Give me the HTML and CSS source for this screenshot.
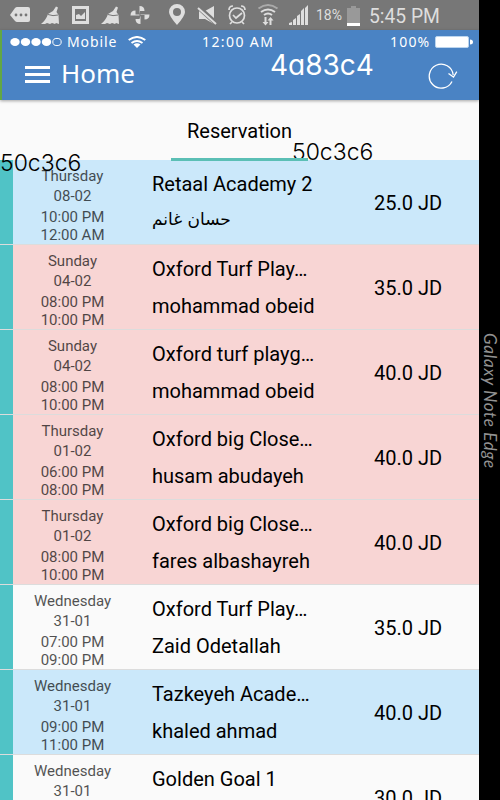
FILE: index.html
```
<!DOCTYPE html>
<html lang="en">
<head>
<meta charset="utf-8">
<title>Home</title>
<link rel="stylesheet" href="styles.css">
</head>
<body>
<div class="device">
  <div class="screen">

    <!-- Android notification bar -->
    <div class="system-bar">
      <svg class="system-icons" width="312" height="30" viewBox="0 0 312 30" fill="#dedede">
        <path d="M10 15l5-7q1-1 2-1h11q2 0 2 2v11q0 2-2 2H17q-1 0-2-1z"/>
        <g fill="#777"><circle cx="16" cy="15" r="1.4"/><circle cx="21" cy="15" r="1.4"/><circle cx="26" cy="15" r="1.4"/></g>
        <g id="broom"><path d="M41 24q5-4 7-10l5-3 3-4.500 2 1-1.500 4.500 2 3 .5 9-3-1-1 1-3-1-2 1-3-1-2 1z"/><path d="M48 14.500q5 2 10 .5" fill="none" stroke="#777" stroke-width="1"/></g>
        <use href="#broom" x="60"/>
        <path fill-rule="evenodd" d="M72 6h17v18H72zM75 9v12h11V9z"/><path d="M76 19v-4l3-1 2 2 4-4v7z"/>
        <!-- pinwheel -->
        <path d="M139.500 14.500V6q5 0 5 5H140zM140.500 14.500h9q0 5-5 5v-4.500h-4zM140.500 15.500V24q-5 0-5-5h4zM139.500 15.500h-9q0-5 5-5v4h4z"/>
        <path fill-rule="evenodd" d="M177 25q-8-9-8-13a8 8 0 0116 0q0 4-8 13zm0-17a4 4 0 100 8 4 4 0 000-8z"/>
        <path d="M199 11h6l9-5v18l-9-5h-6z"/>
        <path d="M197 6l20 18" stroke="#777" stroke-width="5"/><path d="M198 8l18 16" stroke="#dedede" stroke-width="2"/>
        <g fill="none" stroke="#dedede" stroke-width="1.7"><circle cx="237" cy="15.500" r="7.500"/><path d="M233 15l3 3 6-5M229 10q0-4 4-4M241 6q4 0 4 4M232 22l-2 2M242 22l2 2"/></g>
        <g fill="none" stroke="#dedede" stroke-width="2"><path d="M258.500 8.500q9.500-7 19 0" stroke="#aaa"/><path d="M261 12q7-5 14 0M264 15q4-3 8 0"/></g>
        <path d="M264.500 17h2v5h2l-3 3.500-3-3.500h2zM269.500 25h2v-4.500h2l-3-3.500-3 3.500h2z"/>
        <path d="M289 25v-2l3-1v3zM293 25v-5l3-2v7zM297 25V16l3-2v11zM301 25V11l3-3v17zM305 25V8l3-3v20z"/>
      </svg>
      <span class="system-percent">18%</span>
      <svg class="system-battery" width="13" height="20" viewBox="0 0 13 20">
        <path d="M4 0h5v2h4v18H0V2h4z" fill="#999"/><path d="M0 17h13v3H0z" fill="#fff"/>
      </svg>
      <span class="system-time">5:45 PM</span>
    </div>

    <div class="header">
      <div class="carrier-bar">
        <svg class="signal-dots" width="52" height="10" viewBox="0 0 52 10" fill="#fff">
          <ellipse cx="5" cy="5" rx="4.700" ry="4"/><ellipse cx="15.500" cy="5" rx="4.700" ry="4"/>
          <ellipse cx="26" cy="5" rx="4.700" ry="4"/><ellipse cx="36.500" cy="5" rx="4.700" ry="4"/>
          <ellipse cx="47" cy="5" rx="4.200" ry="3.600" fill="none" stroke="#fff"/>
        </svg>
        <span class="carrier">Mobile</span>
        <svg class="wifi" width="18" height="12" viewBox="0 0 18 12">
          <g fill="none" stroke="#fff" stroke-width="2"><path d="M.7 4q8.300-6 16.600 0M3.500 7q5.500-4 11 0"/></g>
          <path d="M5.500 8.500q3.500-2.500 7 0L9 12z" fill="#fff"/>
        </svg>
        <span class="clock">12:00 AM</span>
        <span class="charge">100%</span>
        <svg class="battery" width="38" height="12" viewBox="0 0 38 12">
          <rect x=".5" y=".5" width="33" height="11" rx="1.500" fill="#fff" stroke="#bcd5ee"/>
          <path d="M35 3.500q3 0 3 2.500t-3 2.500z" fill="#fff"/>
        </svg>
      </div>
      <div class="nav-bar">
        <div class="menu-button"><i></i><i></i><i></i></div>
        <h1 class="title">Home</h1>
        <svg class="refresh" width="30" height="28" viewBox="0 0 30 28" fill="none" stroke="#fff" stroke-width="1.300">
          <path d="M24 18.500A12 12 0 1 1 25.200 12M20.500 10.500l5 3.500 3.300-5.300"/>
        </svg>
      </div>
      <span class="note note-header">4a83c4</span>
    </div>

    <div class="tabs">
      <div class="tab">Reservation</div>
      <span class="note note-tab">50c3c6</span>
      <span class="note note-side">50c3c6</span>
    </div>

    <div class="list">
      <div class="row blue">
        <div class="date"><p>Thursday</p><p>08-02</p><p>10:00 PM</p><p>12:00 AM</p></div>
        <div class="info"><p>Retaal Academy 2</p><p class="arabic" lang="ar">حسان غانم</p></div>
        <div class="price">25.0 JD</div>
      </div>
      <div class="row pink">
        <div class="date"><p>Sunday</p><p>04-02</p><p>08:00 PM</p><p>10:00 PM</p></div>
        <div class="info"><p>Oxford Turf Play…</p><p>mohammad obeid</p></div>
        <div class="price">35.0 JD</div>
      </div>
      <div class="row pink">
        <div class="date"><p>Sunday</p><p>04-02</p><p>08:00 PM</p><p>10:00 PM</p></div>
        <div class="info"><p>Oxford turf playg…</p><p>mohammad obeid</p></div>
        <div class="price">40.0 JD</div>
      </div>
      <div class="row pink">
        <div class="date"><p>Thursday</p><p>01-02</p><p>06:00 PM</p><p>08:00 PM</p></div>
        <div class="info"><p>Oxford big Close…</p><p>husam abudayeh</p></div>
        <div class="price">40.0 JD</div>
      </div>
      <div class="row pink">
        <div class="date"><p>Thursday</p><p>01-02</p><p>08:00 PM</p><p>10:00 PM</p></div>
        <div class="info"><p>Oxford big Close…</p><p>fares albashayreh</p></div>
        <div class="price">40.0 JD</div>
      </div>
      <div class="row">
        <div class="date"><p>Wednesday</p><p>31-01</p><p>07:00 PM</p><p>09:00 PM</p></div>
        <div class="info"><p>Oxford Turf Play…</p><p>Zaid Odetallah</p></div>
        <div class="price">35.0 JD</div>
      </div>
      <div class="row blue">
        <div class="date"><p>Wednesday</p><p>31-01</p><p>09:00 PM</p><p>11:00 PM</p></div>
        <div class="info"><p>Tazkeyeh Acade…</p><p>khaled ahmad</p></div>
        <div class="price">40.0 JD</div>
      </div>
      <div class="row">
        <div class="date"><p>Wednesday</p><p>31-01</p></div>
        <div class="info"><p>Golden Goal 1</p></div>
        <div class="price">30.0 JD</div>
      </div>
    </div>
  </div>

  <div class="edge">Galaxy Note Edge</div>
</div>
</body>
</html>
```
FILE: styles.css
```
* {
  box-sizing: border-box;
}

body {
  margin: 0;
  overflow: hidden;
  font-family: Roboto, "Liberation Sans", sans-serif;
}

p, h1 {
  margin: 0;
  font-weight: normal;
}

.device {
  display: flex;
  width: 500px;
  height: 800px;
  background: #000;
}

.screen {
  width: 479px;
  height: 800px;
  overflow: hidden;
  background: #fafafa;
}

/* System bar */
.system-bar {
  display: flex;
  align-items: center;
  height: 30px;
  background: #777;
  color: #dedede;
  white-space: nowrap;
}

.system-icons {
  flex: none;
}

.system-percent {
  width: 35px;
  padding-left: 4px;
  font-size: 14px;
}

.system-battery {
  margin-top: 1px;
}

.system-time {
  margin-left: 9px;
  padding-top: 2px;
  font-size: 19.3px;
}

/* Header */
.header {
  position: relative;
  height: 70px;
  border-left: 2px solid #62a744;
  background: #4a83c4;
  color: #fff;
  font-family: "Noto Sans", sans-serif;
  box-shadow: 0 1px 3px rgba(0, 0, 0, 0.35);
}

.carrier-bar {
  display: flex;
  align-items: center;
  height: 23px;
  padding-left: 8px;
  font-size: 14px;
}

.carrier {
  width: 61px;
  padding-left: 5px;
  letter-spacing: 0.9px;
}

.wifi {
  margin-left: 5px;
}

.clock {
  width: 188px;
  padding-left: 56px;
  letter-spacing: 1.4px;
  white-space: nowrap;
}

.charge {
  width: 45px;
  margin-left: 56px;
  letter-spacing: 1.2px;
}

.nav-bar {
  display: flex;
  align-items: center;
  height: 40px;
  padding-left: 23px;
}

.menu-button {
  display: flex;
  flex-direction: column;
  gap: 4px;
  padding-top: 3px;
}

.menu-button i {
  width: 25px;
  height: 3px;
  background: #fff;
}

.title {
  width: 378px;
  padding-left: 11px;
  font-size: 26px;
  line-height: 36px;
}

.refresh {
  flex: none;
  margin-top: 8px;
}

/* Colour labels lying over the page */
.note {
  position: absolute;
  font-family: Inter, sans-serif;
  font-weight: 300;
  font-feature-settings: "cv11";
  line-height: 28px;
  color: #000;
}

.note-header {
  left: 268px;
  top: 21px;
  font-size: 28px;
  font-weight: 400;
  color: #fff;
}

.note-tab {
  left: 292px;
  top: 38px;
  font-size: 23px;
}

.note-side {
  left: 0;
  top: 49px;
  font-size: 23px;
}

/* Tabs */
.tabs {
  position: relative;
  display: flex;
  justify-content: center;
  height: 60px;
}

.tab {
  z-index: 1;
  width: 137px;
  height: 61px;
  padding-top: 18px;
  border-bottom: 3px solid #5bbfb5;
  font-size: 20px;
  line-height: 26px;
  text-align: center;
}

/* Reservations */
.row {
  display: flex;
  height: 85px;
  border-bottom: 1px solid #dcdcdc;
}

.row::before {
  content: "";
  width: 13px;
  background: #50c3c6;
}

.blue {
  background: #cbe8fa;
}

.pink {
  background: #f8d5d4;
}

.date {
  width: 119px;
  padding-top: 6px;
  font-size: 15px;
  line-height: 20px;
  text-align: center;
  opacity: 0.68;
}

.date p:nth-child(3) {
  margin-top: 1px;
}

.date p:nth-child(4) {
  margin-top: -2px;
}

.info {
  width: 221px;
  padding: 6px 0 0 20px;
  font-size: 20px;
  line-height: 37px;
  white-space: nowrap;
}

.info .arabic {
  font-family: "DejaVu Sans", sans-serif;
  font-size: 17px;
  line-height: 33px;
}

.price {
  padding-left: 21px;
  font-size: 20px;
  line-height: 86px;
  white-space: nowrap;
}

/* Curved side of the phone */
.edge {
  width: 21px;
  padding-top: 333px;
  writing-mode: vertical-rl;
  font-family: Lato, cursive;
  font-style: italic;
  font-size: 17px;
  line-height: 19px;
  letter-spacing: 0.7px;
  white-space: nowrap;
  color: #929292;
}
```
